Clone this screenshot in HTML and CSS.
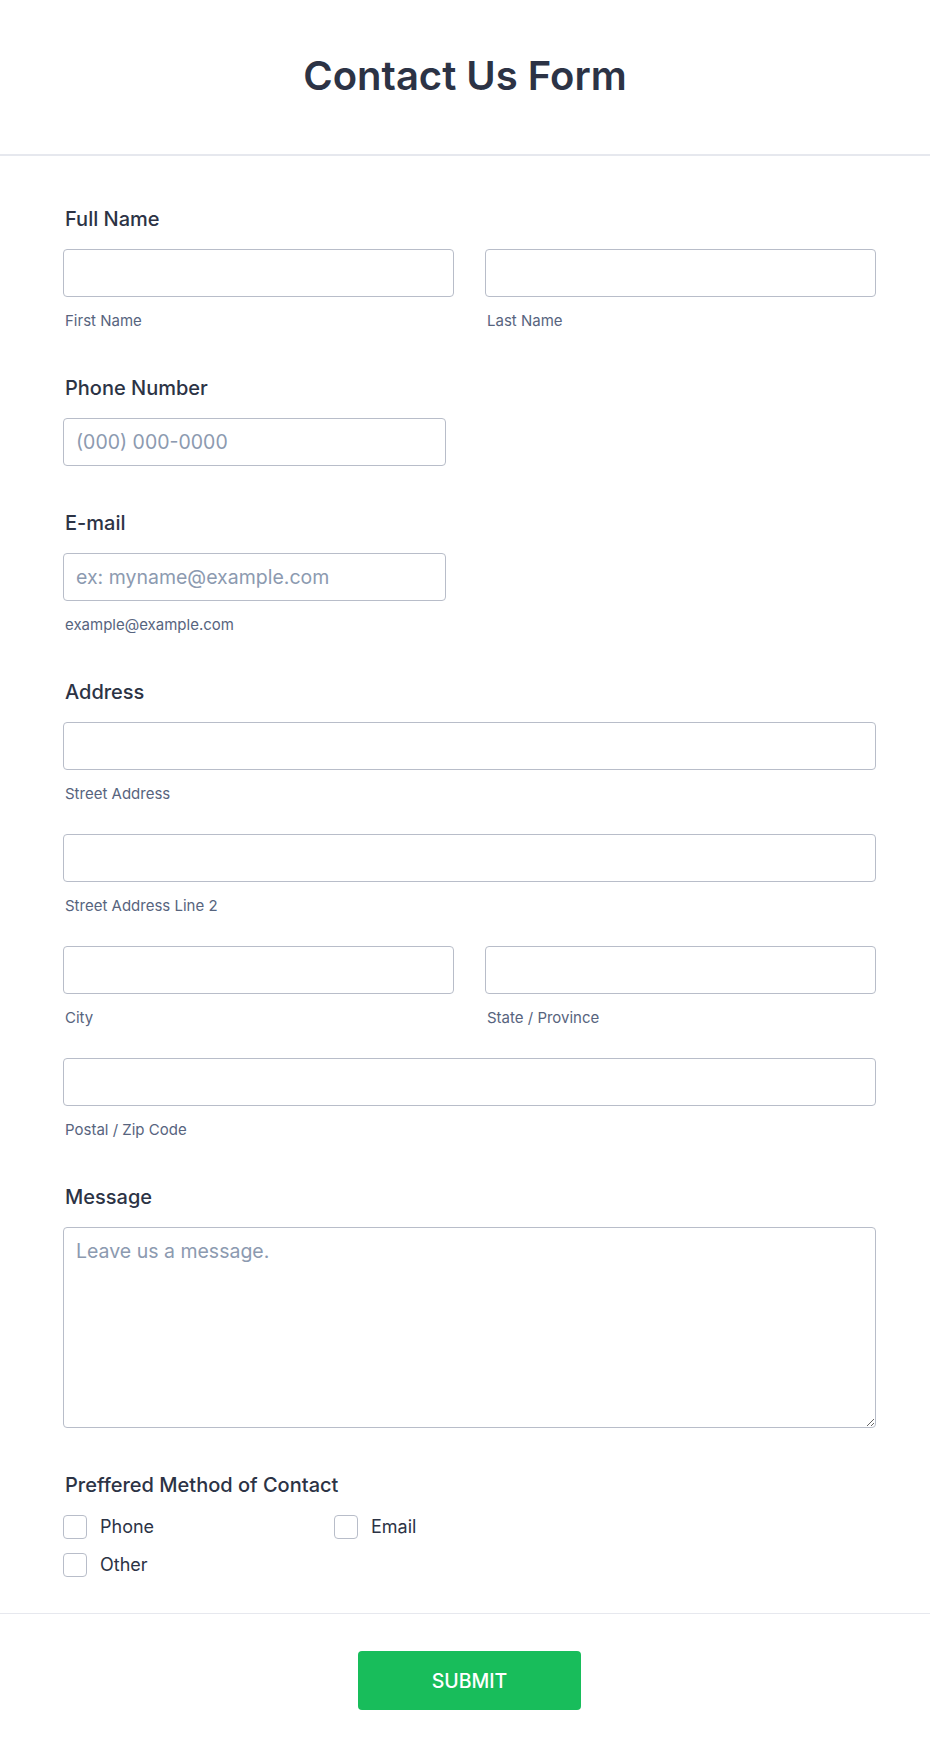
FILE: index.html
```html
<!DOCTYPE html>
<html lang="en">
<head>
  <meta charset="UTF-8">
  <meta name="viewport" content="width=device-width, initial-scale=1.0">
  <title>Contact Us Form</title>
  <link rel="stylesheet" href="styles.css">
</head>
<body>
  <div class="form-header">
    <h1>Contact Us Form</h1>
  </div>

  <form class="form-body">
    <!-- full name -->
    <div class="field">
      <label class="form-label">Full Name</label>
      <div class="two-cols">
        <div>
          <input type="text" class="form-input">
          <span class="sublabel">First Name</span>
        </div>
        <div>
          <input type="text" class="form-input">
          <span class="sublabel">Last Name</span>
        </div>
      </div>
    </div>

    <div class="field">
      <label class="form-label">Phone Number</label>
      <input type="tel" class="form-input half" placeholder="(000) 000-0000">
    </div>

    <div class="field">
      <label class="form-label">E-mail</label>
      <input type="email" class="form-input half" placeholder="ex: myname@example.com">
      <span class="sublabel">example@example.com</span>
    </div>

    <!-- address -->
    <div class="field">
      <label class="form-label">Address</label>
      <div class="address-row">
        <input type="text" class="form-input">
        <span class="sublabel">Street Address</span>
      </div>
      <div class="address-row">
        <input type="text" class="form-input">
        <span class="sublabel">Street Address Line 2</span>
      </div>
      <div class="address-row two-cols">
        <div>
          <input type="text" class="form-input">
          <span class="sublabel">City</span>
        </div>
        <div>
          <input type="text" class="form-input">
          <span class="sublabel">State / Province</span>
        </div>
      </div>
      <div class="address-row">
        <input type="text" class="form-input">
        <span class="sublabel">Postal / Zip Code</span>
      </div>
    </div>

    <div class="field">
      <label class="form-label">Message</label>
      <textarea class="form-input message" placeholder="Leave us a message."></textarea>
    </div>

    <div class="field last">
      <label class="form-label">Preffered Method of Contact</label>
      <div class="checks">
        <label class="check"><input type="checkbox"><span>Phone</span></label>
        <label class="check"><input type="checkbox"><span>Email</span></label>
        <label class="check"><input type="checkbox"><span>Other</span></label>
      </div>
    </div>
  </form>

  <div class="form-footer">
    <button type="button" class="submit-btn">SUBMIT</button>
  </div>
</body>
</html>
```

FILE: styles.css
```css
body {
  margin: 0;
  font-family: Inter, "Noto Sans", Arial, sans-serif;
  color: #2c3345;
  background-color: white;
}

.form-header {
  padding: 52px 0 54px;
  border-bottom: 2px solid #e6e8ee;
}

h1 {
  margin: 0;
  text-align: center;
  font-size: 40px;
  line-height: 48px;
  font-weight: 600;
  color: #2c3345;
}

.form-body {
  padding: 51px 54px 36px 63px;
  border-bottom: 1px solid #e6e8ee;
}

.field {
  margin-bottom: 45px;
}

.field.last {
  margin-bottom: 0;
}

.form-label {
  display: block;
  padding-left: 2px;
  font-size: 20px;
  line-height: 24px;
  font-weight: 500;
  margin-bottom: 18px;
}

.form-input {
  display: block;
  box-sizing: border-box;
  width: 100%;
  height: 48px;
  padding: 0 12px;
  border: 1px solid #b8bdc9;
  border-radius: 4px;
  font-family: inherit;
  font-size: 19.5px;
  color: #2c3345;
  background: white;
}

.form-input::placeholder {
  color: #8c9ab0;
}

.form-input.half {
  width: 383px;
}

.form-input.message {
  height: 201px;
  padding-top: 11px;
  resize: vertical;
}

.sublabel {
  display: block;
  margin-top: 14px;
  padding-left: 2px;
  font-size: 15px;
  line-height: 20px;
  color: #57647e;
}

.two-cols {
  display: grid;
  grid-template-columns: 1fr 1fr;
  gap: 31px;
}

.address-row {
  margin-bottom: 30px;
}

.address-row:last-child {
  margin-bottom: 0;
}

.checks {
  display: grid;
  grid-template-columns: 271px 271px;
  row-gap: 14px;
}

.check {
  display: flex;
  align-items: center;
  gap: 13px;
  font-size: 18px;
  line-height: 24px;
}

.check input {
  appearance: none;
  margin: 0;
  width: 24px;
  height: 24px;
  border: 1px solid #b8bdc9;
  border-radius: 4px;
  background: white;
}

.form-footer {
  display: flex;
  justify-content: center;
  padding: 37px 54px 50px 63px;
}

.submit-btn {
  width: 223px;
  height: 59px;
  border: none;
  border-radius: 4px;
  background-color: #18bd5b;
  color: white;
  font-family: inherit;
  font-size: 19.5px;
  font-weight: 500;
  cursor: pointer;
}
```
